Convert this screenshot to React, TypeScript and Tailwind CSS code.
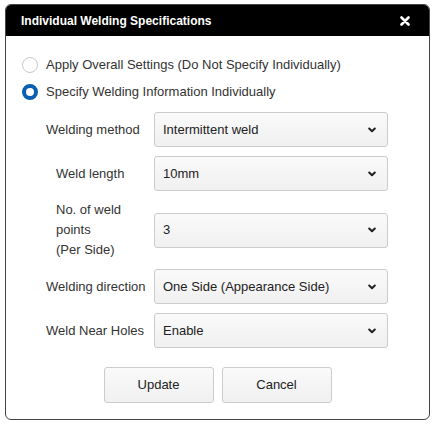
import React from "react";

const Chevron = () => (
  <svg width="8" height="6" viewBox="0 0 8 6" className="shrink-0">
    <polyline points="1.2,1.5 4,4.3 6.8,1.5" fill="none" stroke="#222" strokeWidth="2" strokeLinecap="round" strokeLinejoin="round" />
  </svg>
);

const Select = ({ value }: { value: string }) => (
  <div className="w-[234px] h-[35px] shrink-0 flex items-center justify-between pl-[8px] pr-[11px] border border-[#cccccc] rounded-[3px] bg-gradient-to-b from-[#fafafa] to-[#f0f0f0] text-[13px] text-[#222]">
    <span>{value}</span>
    <Chevron />
  </div>
);

const Row = ({ label, value, indent }: { label: React.ReactNode; value: string; indent?: boolean }) => (
  <div className="flex items-center">
    <div className={`w-[108px] shrink-0 text-[13px] text-[#333] leading-[20px] ${indent ? "pl-[10px]" : ""}`}>{label}</div>
    <Select value={value} />
  </div>
);

export default function App() {
  return (
    <div className="w-[435px] h-[425px] bg-white pt-[4px] pl-[5px]" style={{ fontFamily: '"Liberation Sans", Arial, sans-serif' }}>
      <div className="w-[425px] h-[416px] border border-[#444] rounded-[6px] overflow-hidden bg-white flex flex-col">
        <div className="h-[31px] bg-black flex items-center justify-between pl-[15px] pr-[19px] shrink-0">
          <span className="text-white text-[12px] font-bold">Individual Welding Specifications</span>
          <svg width="10" height="10" viewBox="0 0 10 10">
            <path d="M1.5 1.5 L8.5 8.5 M8.5 1.5 L1.5 8.5" stroke="white" strokeWidth="2.6" strokeLinecap="round" />
          </svg>
        </div>
        <div className="flex flex-col pt-[19px] pl-[16px]">
          <div className="flex items-center h-[20px] gap-[8px]">
            <span className="w-[16px] h-[16px] rounded-full border border-[#c8c8c8] bg-white" />
            <span className="text-[13px] text-[#333]">Apply Overall Settings (Do Not Specify Individually)</span>
          </div>
          <div className="flex items-center h-[20px] gap-[8px] mt-[7px]">
            <span className="w-[16px] h-[16px] rounded-full border-[4.5px] border-[#0c5fb0] bg-white" />
            <span className="text-[13px] text-[#333]">Specify Welding Information Individually</span>
          </div>
        </div>
        <div className="flex flex-col gap-[9px] pl-[40px] mt-[10px]">
          <Row label="Welding method" value="Intermittent weld" />
          <Row label="Weld length" value="10mm" indent />
          <Row label={<>No. of weld<br />points<br />(Per Side)</>} value="3" indent />
          <Row label="Welding direction" value="One Side (Appearance Side)" />
          <Row label="Weld Near Holes" value="Enable" />
        </div>
        <div className="flex justify-center gap-[8px] mt-[19px]">
          <button className="w-[110px] h-[36px] border border-[#cccccc] rounded-[3px] bg-gradient-to-b from-[#fafafa] to-[#f0f0f0] text-[13px] text-[#222]">Update</button>
          <button className="w-[110px] h-[36px] border border-[#cccccc] rounded-[3px] bg-gradient-to-b from-[#fafafa] to-[#f0f0f0] text-[13px] text-[#222]">Cancel</button>
        </div>
      </div>
    </div>
  );
}
